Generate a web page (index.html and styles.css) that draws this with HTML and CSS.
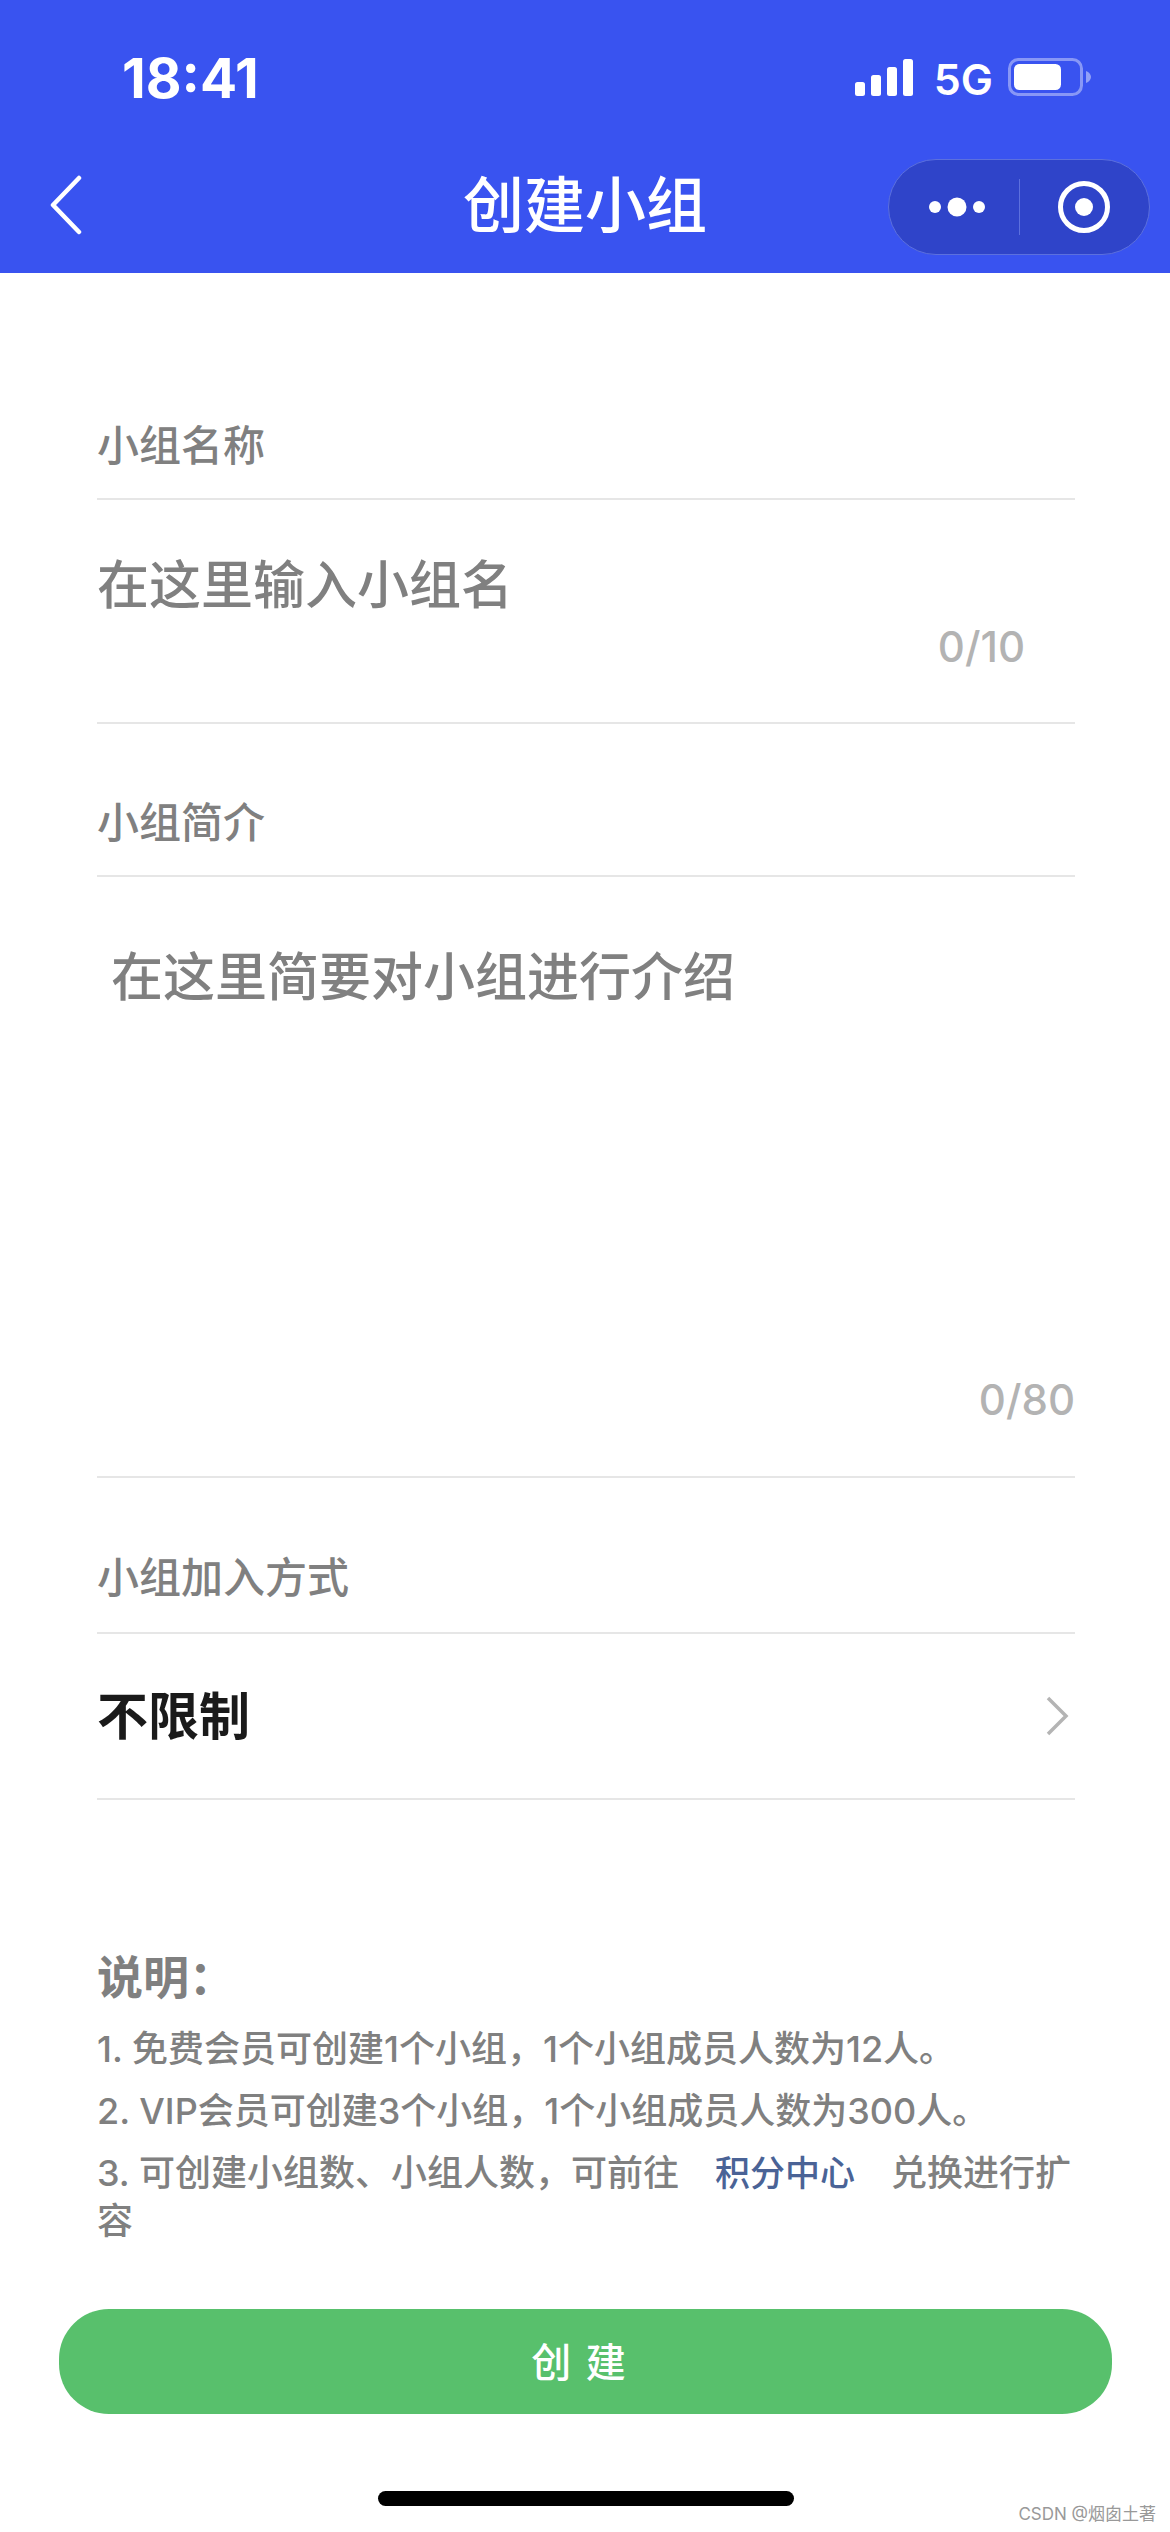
FILE: index.html
```html
<!DOCTYPE html>
<html lang="zh-CN">
<head>
  <meta charset="UTF-8">
  <title>创建小组</title>
  <link rel="stylesheet" href="styles.css">
</head>
<body>
  <div class="page">
    <header class="top">
      <div class="status">
        <span class="time">18:41</span>
        <div class="status-right">
          <svg class="signal" width="58" height="37" viewBox="0 0 58 37">
            <rect x="0" y="23" width="10" height="14" rx="2.5" fill="#fff"/>
            <rect x="16" y="16" width="10" height="21" rx="2.5" fill="#fff"/>
            <rect x="32" y="8" width="10" height="29" rx="2.5" fill="#fff"/>
            <rect x="48" y="0" width="10" height="37" rx="2.5" fill="#fff"/>
          </svg>
          <span class="net">5G</span>
          <svg class="battery" width="83" height="38" viewBox="0 0 83 38">
            <rect x="1.5" y="1.5" width="72" height="35" rx="9" fill="none" stroke="#fff" stroke-opacity=".4" stroke-width="3"/>
            <rect x="6" y="6" width="47" height="26" rx="5.5" fill="#fff"/>
            <path d="M78 13c3 1 5 3.500 5 6s-2 5-5 6z" fill="#fff" fill-opacity=".45"/>
          </svg>
        </div>
      </div>
      <div class="nav">
        <svg class="back" width="32" height="60" viewBox="0 0 32 60">
          <path d="M29 3 3 30l26 27" fill="none" stroke="#fff" stroke-width="4.500" stroke-linecap="round" stroke-linejoin="round"/>
        </svg>
        <h1 class="title">创建小组</h1>
        <div class="capsule">
          <div class="capsule-side">
            <svg class="more" width="56" height="20" viewBox="0 0 56 20">
              <circle cx="6" cy="10" r="6" fill="#fff"/>
              <circle cx="28" cy="10" r="9.500" fill="#fff"/>
              <circle cx="50" cy="10" r="6" fill="#fff"/>
            </svg>
          </div>
          <div class="capsule-line"></div>
          <div class="capsule-side">
            <svg width="52" height="52" viewBox="0 0 52 52">
              <circle cx="26" cy="26" r="23.500" fill="none" stroke="#fff" stroke-width="5"/>
              <circle cx="26" cy="26" r="9" fill="#fff"/>
            </svg>
          </div>
        </div>
      </div>
    </header>

    <main class="form">
      <div class="label first">小组名称</div>
      <div class="field name-field">
        <div class="placeholder">在这里输入小组名</div>
        <div class="count name-count">0/10</div>
      </div>

      <div class="label">小组简介</div>
      <div class="field intro-field">
        <div class="placeholder intro-text">在这里简要对小组进行介绍</div>
        <div class="count">0/80</div>
      </div>

      <div class="label join-label">小组加入方式</div>
      <div class="field select-field">
        <span class="select-value">不限制</span>
        <svg width="24" height="40" viewBox="0 0 24 40">
          <path d="M3 2 21 20 3 38" fill="none" stroke="#b4b4b4" stroke-width="3.500"/>
        </svg>
      </div>

      <section class="notes">
        <h2 class="notes-title">说明：</h2>
        <p class="note">1. 免费会员可创建1个小组，1个小组成员人数为12人。</p>
        <p class="note">2. VIP会员可创建3个小组，1个小组成员人数为300人。</p>
        <p class="note">3. 可创建小组数、小组人数，可前往<a class="link">积分中心</a>兑换进行扩容</p>
      </section>
    </main>

    <button class="create-btn">创 建</button>
    <div class="home-bar"></div>
    <div class="watermark">CSDN @烟囱土著</div>
  </div>
</body>
</html>
```

FILE: styles.css
```css
* { box-sizing: border-box; }
body {
  margin: 0;
  background: #fff;
  font-family: Inter, "Noto Sans CJK SC", sans-serif;
}
.page {
  position: relative;
  width: 1170px;
  height: 2532px;
  overflow: hidden;
}

/* top bar */
.top {
  height: 273px;
  background: #3953f0;
  color: #fff;
}
.status {
  display: flex;
  justify-content: space-between;
  height: 159px;
  padding: 58px 79px 0 122px;
}
.time {
  font-size: 55px;
  font-weight: 700;
  line-height: 40px;
  height: 40px;
  margin-top: 0;
}
.status-right {
  display: flex;
  align-items: flex-start;
  gap: 21px;
  height: 40px;
}
.signal { margin-top: 1px; }
.net {
  margin-right: -6px;
  font-size: 43px;
  font-weight: 600;
  line-height: 42px;
}
.nav {
  position: relative;
  display: flex;
  align-items: flex-start;
  justify-content: space-between;
  padding: 0 20px 0 50px;
}
.back { margin-top: 16px; }
.title {
  position: absolute;
  left: 0;
  right: 0;
  top: 15px;
  margin: 0;
  text-align: center;
  font-size: 61px;
  font-weight: 500;
  line-height: 64px;
}
.capsule {
  display: flex;
  align-items: center;
  width: 262px;
  height: 96px;
  background: #2f44c9;
  border: 1.500px solid #5c70de;
  border-radius: 48px;
}
.capsule-side {
  flex: 1;
  display: flex;
  justify-content: center;
  align-items: center;
}
.more { margin-left: 6px; }
.capsule-line {
  width: 1px;
  height: 56px;
  background: #5c70de;
}

/* form */
.form { padding: 0 95px 0 97px; }
.label {
  margin-top: 69px;
  padding-bottom: 22px;
  border-bottom: 2px solid #e6e6e6;
  color: #808080;
  font-size: 42px;
  font-weight: 500;
  line-height: 60px;
}
.label.first { margin-top: 143px; }
.label.join-label {
  margin-top: 70px;
  padding-bottom: 24px;
}
.field { border-bottom: 2px solid #e6e6e6; }
.placeholder {
  padding-top: 56px;
  color: #808080;
  font-size: 52px;
  font-weight: 500;
  line-height: 60px;
}
.count {
  color: #b3b3b3;
  font-size: 42px;
  font-weight: 500;
  line-height: 60px;
  text-align: right;
}
.name-field { height: 224px; }
.name-count {
  margin-top: 1px;
  padding-right: 50px;
}
.intro-field {
  display: flex;
  flex-direction: column;
  justify-content: space-between;
  height: 601px;
  padding-bottom: 46px;
}
.intro-text {
  padding-left: 14px;
  padding-top: 71px;
}
.select-field {
  display: flex;
  align-items: center;
  justify-content: space-between;
  height: 166px;
  padding-right: 6px;
}
.select-value {
  padding-bottom: 6px;
  color: #1a1a1a;
  font-size: 51px;
  font-weight: 700;
}

/* notes */
.notes { margin-top: 142px; }
.notes-title {
  margin: 0 0 13px;
  color: #808080;
  font-size: 46px;
  font-weight: 700;
  line-height: 70px;
}
.note {
  margin: 0 0 14px;
  color: #808080;
  font-size: 36px;
  font-weight: 500;
  line-height: 48px;
}
.link {
  padding: 0 36px;
  color: #4a6396;
  font-size: 35px;
}

.create-btn {
  position: absolute;
  left: 59px;
  top: 2309px;
  width: 1053px;
  height: 105px;
  padding: 0 12px 4px 0;
  border: none;
  border-radius: 50px;
  background: #58c06c;
  color: #fff;
  font-family: inherit;
  font-size: 40px;
  font-weight: 500;
  letter-spacing: 2px;
}
.home-bar {
  position: absolute;
  left: 378px;
  top: 2491px;
  width: 416px;
  height: 15px;
  border-radius: 8px;
  background: #000;
}
.watermark {
  position: absolute;
  right: 14px;
  top: 2501px;
  color: #999;
  font-size: 17px;
  line-height: 26px;
}
```
